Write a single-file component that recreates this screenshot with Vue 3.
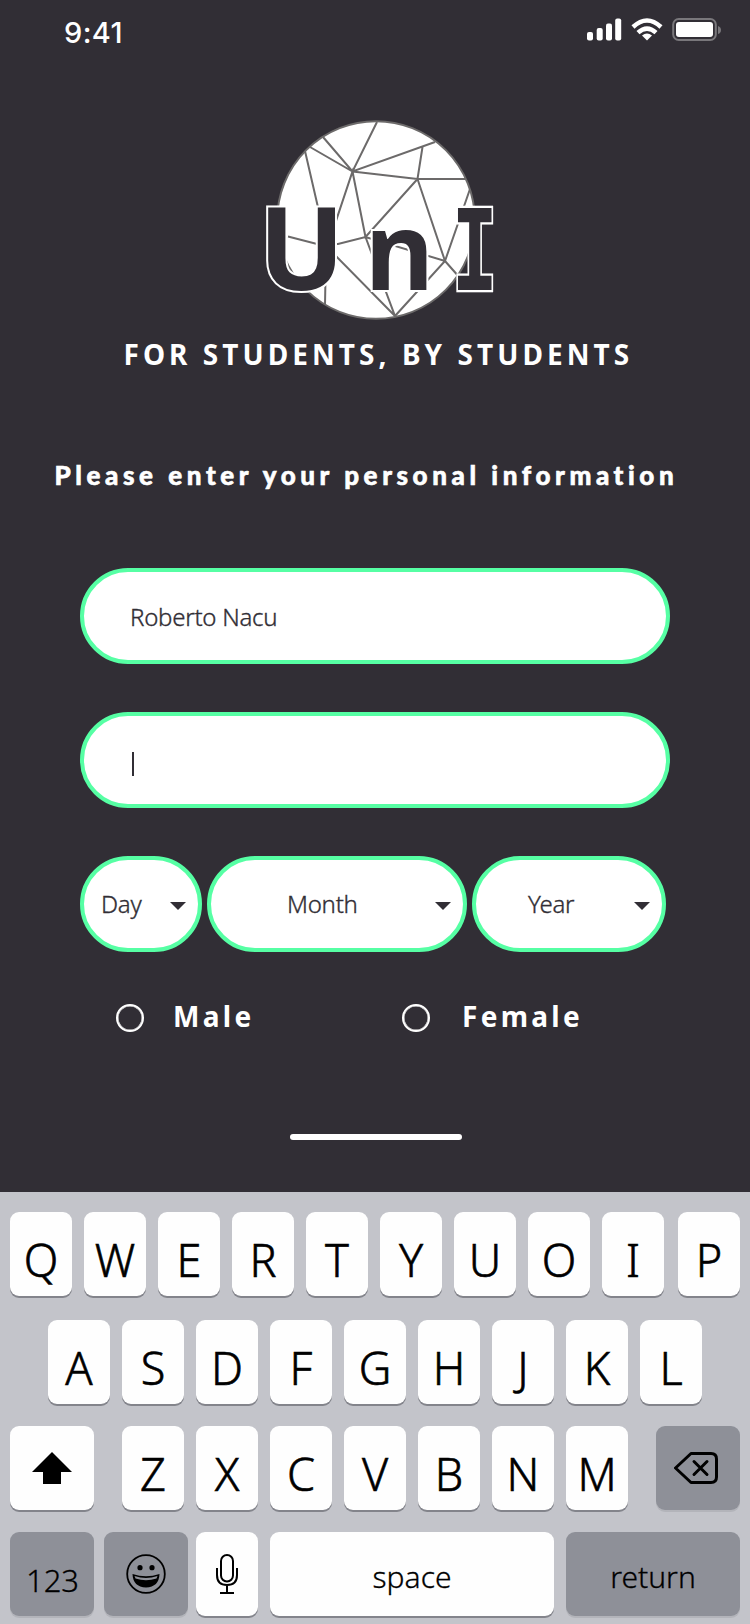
<script setup>
const rowOne = 'QWERTYUOIP'.split('')
const rowTwo = 'ASDFGHJKL'.split('')
const rowThree = 'ZXCVBNM'.split('')
const selects = [
  { id: 'day', label: 'Day' },
  { id: 'month', label: 'Month' },
  { id: 'year', label: 'Year' },
]
</script>

<template>
  <div class="screen">
    <header class="status">
      <span class="time">9:41</span>
      <svg class="indicators" width="136" height="26" viewBox="0 0 136 26">
        <g fill="#fff">
          <rect x="0" y="14" width="6" height="8.500" rx="2" />
          <rect x="9.700" y="10" width="6" height="12.500" rx="2" />
          <rect x="19" y="5.500" width="6" height="17" rx="2" />
          <rect x="28.200" y="0.500" width="6" height="22" rx="2" />
        </g>
        <g fill="none" stroke="#fff" stroke-width="4.500">
          <path d="M46 9 Q60 -4 74 9" />
          <path d="M51 14.700 Q60 6.500 69 14.700" />
        </g>
        <path d="M60 22.500 L55 17.500 Q60 13.500 65 17.500 Z" fill="#fff" />
        <rect x="86.200" y="1" width="42.600" height="21" rx="5.500" fill="none" stroke="#79777b" stroke-width="2" />
        <rect x="89" y="4" width="37" height="15" rx="3" fill="#fff" />
        <path d="M131 8 q3 1 3 4 t-3 4z" fill="#79777b" />
      </svg>
    </header>

    <svg class="logo" width="260" height="220" viewBox="0 0 260 220">
      <circle cx="126" cy="110" r="98.800" fill="#fff" stroke="#6c6a6a" stroke-width="2" />
      <g class="net">
        <path d="M127 12 L102.500 61.500 L73 27 M60 37 L102.500 61.500 L185 32 M102.500 61.500 L167.500 69 L215 69 M172.500 37 L167.500 69 L115.500 127 L102.500 61.500 L76 141 L75 195" />
        <path d="M55 41 L79 145 M38 126.500 L67 134 L88 134 L115.500 127 L195 151 L167.500 69 M220 79 L195 151 L145 206 L115.500 127 M195 151 L210 168 M145 206 L79 139" />
      </g>
      <g class="mark">
        <text transform="translate(8.500 179.500)">U</text>
        <text transform="translate(115 179.500) scale(.93 .95)">n</text>
        <text class="slab" transform="translate(201.500 179.500) scale(.69 1)">I</text>
      </g>
    </svg>

    <p class="tagline">FOR STUDENTS, BY STUDENTS</p>
    <h1 class="prompt">Please enter your personal information</h1>

    <form class="form">
      <div class="field"><span>Roberto Nacu</span></div>
      <div class="field"><i class="caret"></i></div>
      <div class="selects">
        <div v-for="s in selects" :key="s.id" class="field select" :class="s.id">
          <span>{{ s.label }}</span>
          <svg width="16" height="8" viewBox="0 0 16 8"><path d="M0 0H16L8 8Z" fill="#312e35" /></svg>
        </div>
      </div>
      <div class="radios">
        <label class="male"><i class="ring"></i><span>Male</span></label>
        <label class="female"><i class="ring"></i><span>Female</span></label>
      </div>
    </form>

    <div class="home"></div>

    <section class="keyboard">
      <div class="row one">
        <div v-for="k in rowOne" :key="k" class="key" :class="{ last: k === 'P' }">{{ k }}</div>
      </div>
      <div class="row two">
        <div v-for="k in rowTwo" :key="k" class="key">{{ k }}</div>
      </div>
      <div class="row three">
        <div class="key wide shift">
          <svg width="40" height="32" viewBox="0 0 40 32"><path d="M20 0L40 20H29V32H11V20H0Z" /></svg>
        </div>
        <div v-for="k in rowThree" :key="k" class="key">{{ k }}</div>
        <div class="key wide dark erase">
          <svg width="44" height="32" viewBox="0 0 44 32" fill="none" stroke="#000" stroke-width="3" stroke-linejoin="round" stroke-linecap="round">
            <path d="M17 1.500H37Q42.500 1.500 42.500 7V25Q42.500 30.500 37 30.500H17L1.500 16Z" />
            <path d="M20 9.500L33 22.500M33 9.500L20 22.500" />
          </svg>
        </div>
      </div>
      <div class="row four">
        <div class="key wide dark digits">123</div>
        <div class="key wide dark emoji">
          <svg width="40" height="40" viewBox="0 0 40 40">
            <circle cx="20" cy="20" r="18.800" fill="none" stroke="#000" stroke-width="1.800" />
            <circle cx="14" cy="13.700" r="2.600" /><circle cx="26" cy="13.700" r="2.600" />
            <path d="M6.500 20Q20 24.500 33.500 20Q33 33 20 33.500Q7 33 6.500 20Z" />
            <path d="M8.500 22Q20 26 31.500 22L30.500 24.500Q20 28 9.500 24.500Z" fill="#8e9098" />
          </svg>
        </div>
        <div class="key mic">
          <svg width="22" height="40" viewBox="0 0 22 40" fill="none" stroke="#000" stroke-width="2">
            <rect x="5" y="1" width="12" height="26.500" rx="6" />
            <path d="M1 14V21Q1 31 11 31Q21 31 21 21V14M11 31V39M4 39H18" />
          </svg>
        </div>
        <div class="key space">space</div>
        <div class="key dark return">return</div>
      </div>
    </section>
  </div>
</template>

<style>
body {
  background: #312e35;
}
</style>

<style scoped>
* {
  box-sizing: border-box;
}
.screen {
  width: 750px;
  height: 1624px;
  overflow: hidden;
  background: #312e35;
  color: #fff;
  font-family: "Noto Sans", "Open Sans", sans-serif;
  display: flex;
  flex-direction: column;
}
.status {
  height: 110px;
  display: flex;
  justify-content: space-between;
  align-items: flex-start;
  padding: 17px 27px 0 64px;
  flex: none;
}
.time {
  font: 500 29px/32px Inter, sans-serif;
  letter-spacing: 0.4px;
}
.indicators {
  margin-top: 0.5px;
}
.logo {
  margin-left: 250px;
  flex: none;
}
.net {
  fill: none;
  stroke: #6c6a6a;
  stroke-width: 2;
}
.mark text {
  font: 700 114px "Noto Sans", sans-serif;
  fill: #312e35;
  stroke: #fff;
  stroke-width: 4px;
  paint-order: stroke;
  vector-effect: non-scaling-stroke;
}
.mark .slab {
  font: 700 112px "DejaVu Sans Mono", monospace;
}
.tagline {
  margin: 4px 0 0 123.5px;
  font: 700 28px/40px "Noto Sans", sans-serif;
  letter-spacing: 4.05px;
  white-space: nowrap;
}
.prompt {
  margin: 81px 0 0 54.5px;
  font: 900 26px/40px "Lato Black", Lato, sans-serif;
  letter-spacing: 4.58px;
  -webkit-text-stroke: 0.6px #fff;
  white-space: nowrap;
}
.form {
  margin: 73px 80px 0;
  display: flex;
  flex-direction: column;
  gap: 48px;
}
.field {
  height: 96px;
  border: 4px solid #56ffa4;
  border-radius: 48px;
  background: #fff;
  color: #312e35;
  font-size: 24px;
  font-weight: 300;
  -webkit-text-stroke: 0.35px #312e35;
  line-height: 36px;
  letter-spacing: -0.25px;
  display: flex;
  align-items: center;
  padding: 2px 46px 0;
}
.caret {
  width: 2px;
  height: 24px;
  background: #312e35;
  margin: 6px 0 0 2px;
}
.selects {
  display: flex;
  gap: 5px;
}
.select {
  justify-content: space-between;
  padding: 0 12px 0 17px;
}
.select svg {
  margin-top: 4px;
}
.day {
  width: 122px;
}
.month {
  width: 260px;
  padding-left: 76px;
}
.year {
  width: 194px;
  padding-left: 52px;
}
.radios {
  display: flex;
  height: 36px;
  font-weight: 700;
  font-size: 28px;
  line-height: 36px;
  letter-spacing: 3.3px;
}
.radios label {
  display: flex;
  align-items: center;
  width: 286px;
  flex: none;
}
.radios span {
  margin-top: -4px;
}
.radios .male {
  margin-left: 36px;
}
.ring {
  width: 28px;
  height: 28px;
  border: 2.5px solid #fff;
  box-shadow: inset 0 0 0 0.5px #fff;
  border-radius: 50%;
  margin-right: 29px;
}
.female .ring {
  margin-right: 32px;
}
.home {
  width: 172px;
  height: 6px;
  border-radius: 3px;
  background: #fff;
  margin: 98px 0 52px 290px;
  flex: none;
}
.keyboard {
  flex: none;
  height: 432px;
  padding: 20px 10px 0;
  background: #c3c4ca;
  color: #000;
  font-weight: 300;
  -webkit-text-stroke: 0.6px #000;
}
.row {
  display: flex;
  gap: 12px;
  height: 84px;
}
.row.two {
  margin-top: 24px;
  padding-left: 38px;
}
.row.three,
.row.four {
  margin-top: 22px;
}
.key {
  width: 62px;
  height: 84px;
  flex: none;
  border-radius: 9px;
  background: #fefefe;
  box-shadow: 0 2px 0 #83848b;
  display: flex;
  align-items: center;
  justify-content: center;
  font-size: 45px;
  line-height: 60px;
  padding-top: 12px;
}
.last {
  margin-left: 2px;
}
.wide {
  width: 84px;
}
.dark {
  background: #8e9098;
  box-shadow: 0 2px 0 #b3b4ba;
}
.shift,
.erase,
.emoji,
.mic {
  padding-top: 0;
}
.shift {
  margin-right: 16px;
}
.erase {
  margin-left: 16px;
  padding-right: 4px;
}
.digits,
.space,
.return {
  -webkit-text-stroke-width: 0.3px;
}
.digits {
  font-size: 31px;
  padding: 12px 0 0 1px;
}
.emoji {
  margin-left: -2px;
}
.mic {
  margin-left: -4px;
}
.space {
  width: 284px;
  font-size: 30px;
  padding-top: 6px;
}
.return {
  width: 174px;
  font-size: 30px;
  padding-top: 6px;
}
</style>
